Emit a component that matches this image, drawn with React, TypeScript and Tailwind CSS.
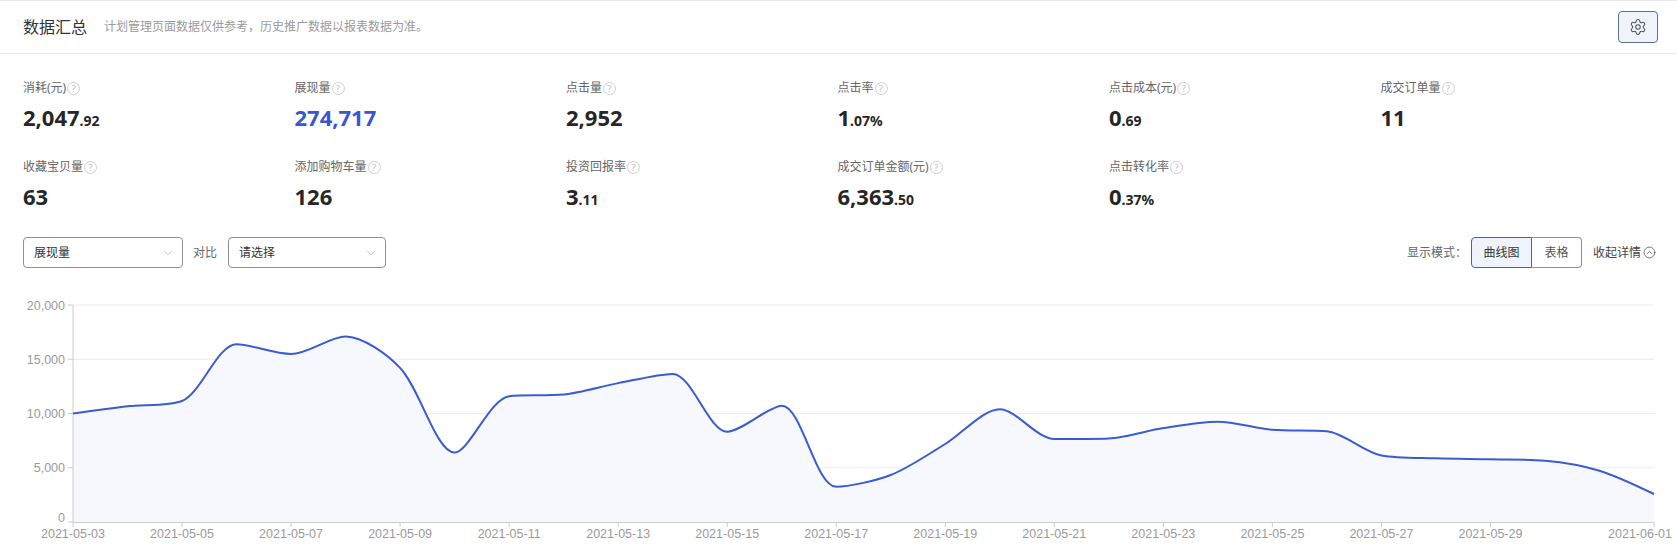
import { Settings, ChevronDown, CircleChevronUp } from "lucide-react";

type Metric = {
  label: string;
  int: string;
  dec?: string;
  blue?: boolean;
};

const METRICS: Metric[] = [
  { label: "消耗(元)", int: "2,047", dec: ".92" },
  { label: "展现量", int: "274,717", blue: true },
  { label: "点击量", int: "2,952" },
  { label: "点击率", int: "1", dec: ".07%" },
  { label: "点击成本(元)", int: "0", dec: ".69" },
  { label: "成交订单量", int: "11" },
  { label: "收藏宝贝量", int: "63" },
  { label: "添加购物车量", int: "126" },
  { label: "投资回报率", int: "3", dec: ".11" },
  { label: "成交订单金额(元)", int: "6,363", dec: ".50" },
  { label: "点击转化率", int: "0", dec: ".37%" },
];

// 展现量 per day, 2021-05-03 .. 2021-06-01
const SERIES = [
  10000, 10660, 11150, 16380, 15480, 17100, 14200, 6400, 11600, 11750, 12800,
  13650, 8320, 10720, 3250, 4330, 7190, 10400, 7650, 7700, 8660, 9250, 8500,
  8360, 6130, 5870, 5780, 5650, 4730, 2580,
];

const X0 = 73;
const X1 = 1654;
const Y_TOP = 37;
const Y_ZERO = 254;
const Y_MAX = 20000;

function dateLabel(i: number): string {
  const d = new Date(Date.UTC(2021, 4, 3 + i));
  const m = String(d.getUTCMonth() + 1).padStart(2, "0");
  const day = String(d.getUTCDate()).padStart(2, "0");
  return `2021-${m}-${day}`;
}

const clamp = (v: number, a: number, b: number) =>
  Math.max(Math.min(a, b), Math.min(v, Math.max(a, b)));

// bezier smoothing with the control points kept inside each segment's box,
// so peaks don't overshoot
function smoothPath(pts: [number, number][], smooth = 0.3): string {
  const n = pts.length;
  const cp0: [number, number][] = [];
  const cp1: [number, number][] = [];
  for (let i = 0; i < n; i++) {
    const [x, y] = pts[i];
    if (i === 0 || i === n - 1) {
      cp0.push([x, y]);
      cp1.push([x, y]);
      continue;
    }
    const [px, py] = pts[i - 1];
    const [nx, ny] = pts[i + 1];
    let vx = nx - px;
    let vy = ny - py;
    const lenPrev = Math.hypot(x - px, y - py);
    const lenNext = Math.hypot(nx - x, ny - y);
    const ratio = lenNext / (lenNext + lenPrev);
    let c1x = clamp(x + vx * smooth * ratio, x, nx);
    let c1y = clamp(y + vy * smooth * ratio, y, ny);
    vx = c1x - x;
    vy = c1y - y;
    const c0x = clamp(x - (vx * lenPrev) / lenNext, px, x);
    const c0y = clamp(y - (vy * lenPrev) / lenNext, py, y);
    vx = x - c0x;
    vy = y - c0y;
    c1x = x + (vx * lenNext) / lenPrev;
    c1y = y + (vy * lenNext) / lenPrev;
    cp0.push([c0x, c0y]);
    cp1.push([c1x, c1y]);
  }
  let d = `M${pts[0][0]},${pts[0][1]}`;
  for (let i = 1; i < n; i++) {
    const a = cp1[i - 1];
    const b = cp0[i];
    d += ` C${a[0].toFixed(2)},${a[1].toFixed(2)} ${b[0].toFixed(2)},${b[1].toFixed(2)} ${pts[i][0].toFixed(2)},${pts[i][1].toFixed(2)}`;
  }
  return d;
}

function HelpIcon() {
  return (
    <span className="ml-[1px] inline-flex h-[13px] w-[13px] items-center justify-center rounded-full border border-[#cfcfcf] text-[9px] leading-none text-[#bdbdbd]">
      ?
    </span>
  );
}

function Select({ value, width }: { value: string; width: string }) {
  return (
    <div
      className={`${width} flex h-[31px] items-center justify-between rounded-[4px] border border-[#8e919b] pl-[10px] pr-[7px] text-[12px] text-[#333]`}
    >
      <span>{value}</span>
      <ChevronDown className="h-[14px] w-[14px] text-[#bcbcbc]" strokeWidth={1.5} />
    </div>
  );
}

function Chart() {
  const step = (X1 - X0) / (SERIES.length - 1);
  const pts: [number, number][] = SERIES.map((v, i) => [
    X0 + i * step,
    Y_ZERO - (v / Y_MAX) * (Y_ZERO - Y_TOP),
  ]);
  const line = smoothPath(pts);
  const area = `${line} L${X1},${Y_ZERO} L${X0},${Y_ZERO} Z`;
  const ticks = [0, 5000, 10000, 15000, 20000];
  const labelIdx = [0, 2, 4, 6, 8, 10, 12, 14, 16, 18, 20, 22, 24, 26, 29];

  return (
    <svg width={1677} height={279} className="block">
      {ticks.map((t) => {
        const y = Y_ZERO - (t / Y_MAX) * (Y_ZERO - Y_TOP);
        return (
          <g key={t}>
            {t > 0 && <line x1={X0} x2={X1} y1={y} y2={y} stroke="#ececec" strokeWidth={1} />}
            <line x1={68} x2={X0} y1={y} y2={y} stroke="#cccccc" strokeWidth={1} />
            <text
              x={65}
              y={t === 0 ? y : y + 4.5}
              textAnchor="end"
              fontSize={12.5}
              fill="#9a9a9a"
              fontFamily="'Liberation Sans', Arial, sans-serif"
            >
              {t.toLocaleString("en-US")}
            </text>
          </g>
        );
      })}
      <path d={area} fill="#f6f8fd" />
      <line x1={X0} x2={X0} y1={Y_TOP} y2={Y_ZERO} stroke="#cccccc" strokeWidth={1} />
      <line x1={X0} x2={X1} y1={Y_ZERO + 0.5} y2={Y_ZERO + 0.5} stroke="#cccccc" strokeWidth={1} />
      <path d={line} fill="none" stroke="#3a5bd1" strokeWidth={2} strokeLinejoin="round" />
      {labelIdx.map((i) => {
        const x = X0 + i * step;
        const last = i === SERIES.length - 1;
        return (
          <g key={i}>
            <line x1={x} x2={x} y1={Y_ZERO} y2={Y_ZERO + 5} stroke="#cccccc" strokeWidth={1} />
            <text
              x={last ? 1672 : x}
              y={270}
              textAnchor={last ? "end" : "middle"}
              fontSize={12.5}
              fill="#9a9a9a"
              fontFamily="'Liberation Sans', Arial, sans-serif"
            >
              {dateLabel(i)}
            </text>
          </g>
        );
      })}
    </svg>
  );
}

export default function App() {
  return (
    <div className="h-[548px] w-[1677px] overflow-hidden border-t border-[#e6e8ee] bg-white font-['Noto_Sans','Noto_Sans_CJK_SC',sans-serif]">
      <div className="flex h-[53px] items-center justify-between border-b border-[#e6e8ed] pl-[23px] pr-[19px]">
        <div className="flex items-center">
          <h2 className="text-[16px] text-[#333]">数据汇总</h2>
          <p className="ml-[17px] text-[12px] text-[#9b9b9b]">
            计划管理页面数据仅供参考，历史推广数据以报表数据为准。
          </p>
        </div>
        <button className="flex h-[32px] w-[40px] items-center justify-center rounded-[4px] border border-[#5f6f8f] bg-[#eef3fc]">
          <Settings className="h-[18px] w-[18px] text-[#555]" strokeWidth={1.4} />
        </button>
      </div>

      <div className="grid grid-cols-6 gap-y-[28px] pl-[23px] pr-[25px] pt-[26px]">
        {METRICS.map((m) => (
          <div key={m.label} className="flex flex-col">
            <div className="flex h-[16px] items-center text-[12px] text-[#666]">
              {m.label}
              <HelpIcon />
            </div>
            <div
              className={`mt-[7px] flex h-[28px] items-baseline font-bold ${
                m.blue ? "text-[#3656d3]" : "text-[#262626]"
              }`}
            >
              <span className="text-[22px] leading-[28px]">{m.int}</span>
              {m.dec && <span className="text-[14px]">{m.dec}</span>}
            </div>
          </div>
        ))}
      </div>

      <div className="mt-[27px] flex items-center justify-between pl-[23px] pr-[21px]">
        <div className="flex items-center">
          <Select value="展现量" width="w-[160px]" />
          <span className="ml-[10px] mr-[11px] text-[12px] text-[#666]">对比</span>
          <Select value="请选择" width="w-[158px]" />
        </div>
        <div className="flex items-center text-[12px]">
          <span className="mr-[4px] text-[#666]">显示模式：</span>
          <div className="flex h-[31px]">
            <button className="w-[61px] rounded-l-[4px] border border-[#3d5fd6] bg-[#eef3fc] text-[#333]">
              曲线图
            </button>
            <button className="w-[50px] rounded-r-[4px] border border-l-0 border-[#8e919b] bg-white text-[#555]">
              表格
            </button>
          </div>
          <span className="ml-[11px] flex items-center text-[#444]">
            收起详情
            <CircleChevronUp className="ml-[2px] h-[13px] w-[13px] text-[#555]" strokeWidth={1.5} />
          </span>
        </div>
      </div>

      <Chart />
    </div>
  );
}
